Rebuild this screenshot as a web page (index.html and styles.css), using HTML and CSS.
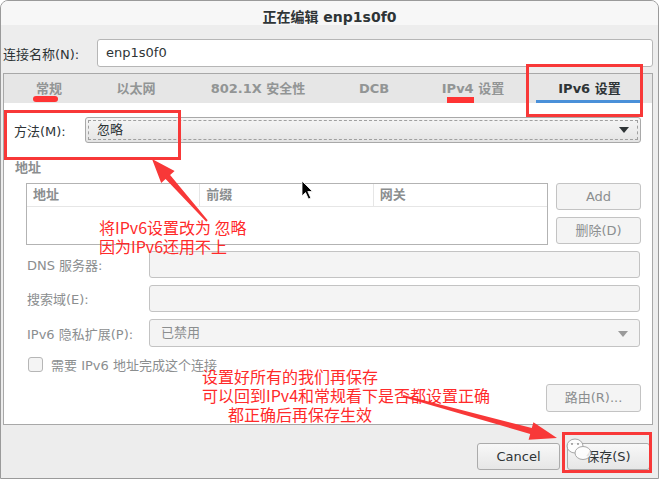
FILE: index.html
```html
<!DOCTYPE html>
<html lang="zh-CN">

<head>
    <meta charset="UTF-8">
    <title>正在编辑 enp1s0f0</title>
    <link rel="stylesheet" href="styles.css">
</head>

<body>
    <div class="window">
        <div class="titlebar">正在编辑 enp1s0f0</div>
        <div class="content">
            <div class="name-row">
                <span class="name-label">连接名称(N):</span>
                <div class="entry name-entry">enp1s0f0</div>
            </div>

            <div class="notebook">
                <div class="tabs">
                    <div class="tab" style="width: 90px">常规</div>
                    <div class="tab" style="width: 84px">以太网</div>
                    <div class="tab" style="width: 160px">802.1X 安全性</div>
                    <div class="tab" style="width: 72px">DCB</div>
                    <div class="tab" style="width: 126px">IPv4 设置</div>
                    <div class="tab active" style="width: 107px">IPv6 设置</div>
                </div>

                <div class="page">
                    <div class="method-row">
                        <span class="method-label">方法(M):</span>
                        <div class="combo focus">
                            <span class="combo-text">忽略</span>
                            <span class="combo-arrow"></span>
                        </div>
                    </div>

                    <div class="section-title">地址</div>
                    <div class="address-area">
                        <div class="addr-table">
                            <div class="addr-head">
                                <div class="col">地址</div>
                                <div class="col">前缀</div>
                                <div class="col last">网关</div>
                            </div>
                        </div>
                        <div class="side-buttons">
                            <div class="btn disabled">Add</div>
                            <div class="btn disabled">删除(D)</div>
                        </div>
                    </div>

                    <div class="form-grid">
                        <span class="form-label">DNS 服务器:</span>
                        <div class="entry disabled"></div>
                        <span class="form-label">搜索域(E):</span>
                        <div class="entry disabled"></div>
                        <span class="form-label">IPv6 隐私扩展(P):</span>
                        <div class="combo disabled">
                            <span class="combo-text">已禁用</span>
                            <span class="combo-arrow"></span>
                        </div>
                    </div>

                    <div class="check-row">
                        <span class="checkbox"></span>
                        <span class="check-label">需要 IPv6 地址完成这个连接</span>
                    </div>

                    <div class="routes-row">
                        <div class="btn disabled routes-btn">路由(R)...</div>
                    </div>
                </div>
            </div>

            <div class="actions">
                <div class="btn action-btn">Cancel</div>
                <div class="btn action-btn">保存(S)</div>
            </div>
        </div>

        <!-- annotations drawn over the dialog -->
        <svg class="marks" width="660" height="479" viewBox="0 0 660 479">
            <rect x="33" y="96" width="25" height="6" rx="3" fill="#ff3434" />
            <rect x="447" y="97" width="27" height="6" fill="#ff3434" />
            <rect x="527.5" y="65.5" width="114" height="50" fill="none" stroke="#f83838" stroke-width="3" />
            <rect x="5.5" y="111.5" width="174" height="47" fill="none" stroke="#f83838" stroke-width="3" />
            <rect x="563.5" y="433.5" width="87" height="38" fill="none" stroke="#f83838" stroke-width="3" />
            <polygon fill="#f83838" points="207.7,220.3 170.1,175 174.6,171 152,159 161.2,183 165.6,179 206.3,221.7" />
            <polygon fill="#f83838" points="403.3,395 531.8,428.1 533.4,422.3 557,438 528.6,439.7 530.2,433.9 402.7,397" />
            <!-- watermark logo -->
            <g opacity="0.85">
                <ellipse cx="575" cy="446" rx="8" ry="7" fill="#fff" stroke="#9a9a9a" stroke-width="1" />
                <ellipse cx="583" cy="453" rx="8" ry="6.5" fill="#fff" stroke="#9a9a9a" stroke-width="1" />
                <circle cx="572" cy="444" r="1" fill="#888" />
                <circle cx="578" cy="444" r="1" fill="#888" />
            </g>
            <!-- mouse pointer -->
            <path d="M302 181 L302 196 L305.5 192.5 L308.5 199 L310.8 198 L307.8 191.5 L312.5 191.5 Z" fill="#000" stroke="#fff" stroke-width="0.8" />
        </svg>

        <div class="note note-a">将IPv6设置改为 忽略<br>因为IPv6还用不上</div>
        <div class="note note-b">设置好所有的我们再保存<br>可以回到IPv4和常规看下是否都设置正确<br><span class="indent">都正确后再保存生效</span></div>
    </div>
</body>

</html>
```

FILE: styles.css
```css
body {
    margin: 0;
    padding: 0;
    background-color: #ffffff;
}

.window {
    position: relative;
    box-sizing: border-box;
    width: 659px;
    height: 479px;
    border: 1px solid #9a9a9a;
    border-radius: 8px 8px 0 0;
    background-color: #ededed;
    font-family: "DejaVu Sans", "Noto Sans CJK SC", sans-serif;
    font-size: 13px;
    color: #2e3436;
    overflow: hidden;
}

.titlebar {
    height: 33px;
    background: linear-gradient(#f7f7f7 0, #f7f7f7 24px, #ededed 24px);
    text-align: center;
    line-height: 32px;
    font-size: 14px;
    font-weight: bold;
    color: #2e3436;
}

.content {
    padding: 0 5px 0 2px;
}

/* connection name */
.name-row {
    display: flex;
    align-items: center;
    margin-top: 5px;
}

.name-label {
    width: 94px;
    flex-shrink: 0;
}

.entry {
    box-sizing: border-box;
    height: 28px;
    border: 1px solid #b6b6b6;
    border-radius: 3px;
    background-color: #ffffff;
    padding-left: 8px;
    line-height: 26px;
}

.name-entry {
    flex-grow: 1;
}

.entry.disabled {
    height: 27px;
    background-color: #f4f4f4;
    border-color: #c3c3c3;
}

/* notebook */
.notebook {
    margin-top: 6px;
    border: 1px solid #a8a8a8;
    background-color: #ffffff;
}

.tabs {
    display: flex;
    height: 29px;
    background-color: #e6e6e6;
}

.tab {
    box-sizing: border-box;
    text-align: center;
    line-height: 29px;
    font-weight: bold;
    color: #929595;
}

.tab.active {
    color: #2e3436;
    border-bottom: 3px solid #4a90d9;
    line-height: 29px;
}

.page {
    height: 321px;
    box-sizing: border-box;
    padding: 14px 11px 0 10px;
}

.method-row {
    display: flex;
    align-items: center;
}

.method-label {
    width: 71px;
    flex-shrink: 0;
}

.combo {
    position: relative;
    box-sizing: border-box;
    flex-grow: 1;
    height: 26px;
    border: 1px solid #a9a9a9;
    border-radius: 3px;
    background: linear-gradient(#f6f6f6, #e4e4e4);
    line-height: 24px;
    padding-left: 11px;
}

.combo.focus::after {
    content: "";
    position: absolute;
    top: 2px;
    left: 2px;
    right: 2px;
    bottom: 2px;
    border: 1px dashed #a0a0a0;
}

.combo-arrow {
    position: absolute;
    right: 11px;
    top: 9px;
    width: 0;
    height: 0;
    border-left: 5px solid transparent;
    border-right: 5px solid transparent;
    border-top: 6px solid #2e3436;
}

.combo.disabled {
    height: 28px;
    background: #f4f4f4;
    border-color: #c3c3c3;
    color: #8b8e8f;
    line-height: 26px;
}

.combo.disabled .combo-arrow {
    top: 11px;
    border-top-color: #9a9a9a;
}

/* addresses */
.section-title {
    margin-top: 16px;
    line-height: 18px;
    padding-left: 1px;
    font-weight: bold;
    color: #8b8e8f;
}

.address-area {
    display: flex;
    gap: 8px;
    margin: 6px 0 0 12px;
}

.addr-table {
    box-sizing: border-box;
    width: 522px;
    height: 62px;
    border: 1px solid #b3b3b3;
}

.addr-head {
    display: flex;
    height: 22px;
    border-bottom: 1px solid #e6e6e6;
}

.col {
    box-sizing: border-box;
    width: 174px;
    padding-left: 6px;
    line-height: 21px;
    font-weight: bold;
    color: #8b8e8f;
    border-right: 1px solid #e6e6e6;
}

.col.last {
    border-right: none;
}

.side-buttons {
    display: flex;
    flex-direction: column;
    gap: 7px;
    width: 85px;
}

.btn {
    box-sizing: border-box;
    height: 27px;
    border: 1px solid #ababab;
    border-radius: 3px;
    background: linear-gradient(#f8f8f8, #e6e6e6);
    text-align: center;
    line-height: 25px;
}

.btn.disabled {
    background: #f4f4f4;
    border-color: #c3c3c3;
    color: #8b8e8f;
}

/* form rows */
.form-grid {
    display: grid;
    grid-template-columns: 122px 1fr;
    row-gap: 7px;
    align-items: center;
    margin: 6px 1px 0 13px;
}

.form-label {
    color: #8b8e8f;
}

.check-row {
    display: flex;
    align-items: center;
    gap: 8px;
    margin: 8px 0 0 14px;
}

.checkbox {
    box-sizing: border-box;
    width: 15px;
    height: 15px;
    border: 1px solid #b6b6b6;
    border-radius: 3px;
    background-color: #f4f4f4;
}

.check-label {
    color: #8b8e8f;
}

.routes-row {
    display: flex;
    justify-content: flex-end;
    margin-top: 10px;
}

.routes-btn {
    width: 95px;
    height: 28px;
    line-height: 26px;
}

/* dialog buttons */
.actions {
    display: flex;
    justify-content: flex-end;
    gap: 7px;
    margin: 18px 3px 0 0;
}

.action-btn {
    width: 83px;
    height: 27px;
}

/* annotations */
.marks {
    position: absolute;
    top: -1px;
    left: -1px;
    pointer-events: none;
}

.note {
    position: absolute;
    font-family: "Noto Sans CJK SC", sans-serif;
    font-size: 16px;
    line-height: 19px;
    color: #ff2a2a;
    white-space: nowrap;
}

.note-a {
    left: 98px;
    top: 217px;
}

.note-b {
    left: 201px;
    top: 366px;
}

.indent {
    padding-left: 26px;
}
```
